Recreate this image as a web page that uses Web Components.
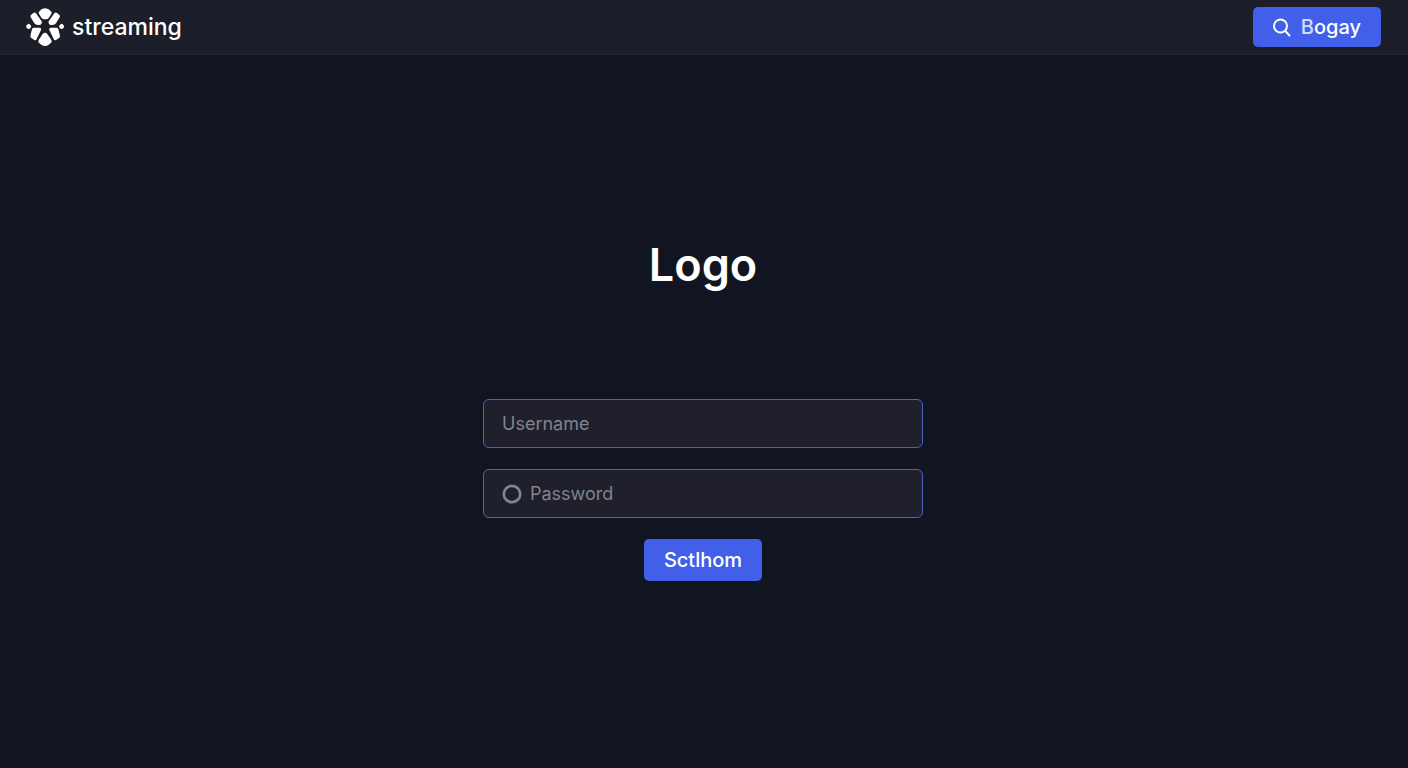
<!DOCTYPE html>
<html lang="en">
<head>
<meta charset="utf-8">
<meta name="viewport" content="width=device-width, initial-scale=1">
<title>streaming</title>
<style>
body { margin: 0; background: #111521; color: #fff; font-family: Inter, "Liberation Sans", sans-serif; }
</style>
</head>
<body>
<login-page></login-page>
<script>
function define(name, html, setup) {
  const template = document.createElement('template');
  template.innerHTML = html;
  customElements.define(name, class extends HTMLElement {
    constructor() {
      super();
      this.attachShadow({ mode: 'open' }).append(template.content.cloneNode(true));
    }
    connectedCallback() {
      if (setup) setup(this);
    }
  });
}

define('brand-mark', `
<style>
:host { display: block; }
a { display: flex; align-items: center; gap: 8px; color: #fff; text-decoration: none; font-size: 23px; line-height: 32px; font-weight: 500; }
svg { display: block; width: 38px; height: 38px; }
</style>
<a href="#">
  <svg viewBox="6 6 114 114" fill="#fff" aria-hidden="true">
    <path d="M45 17Q53 7 63 7T82 17Q84 20 82 24L74 36Q71 40 67 40H60Q56 40 53 36L45 24Q43 20 45 17Z"/>
    <path d="M44 109Q52 120 63 120T82 109Q84 106 82 102L70 84Q63 76 56 84L44 102Q42 106 44 109Z"/>
    <path d="M20 28L29 20Q33 18 36 22L53 46Q55 50 52 54Q49 58 44 57L37 56Q33 55 31 52L20 34Q18 31 20 28Z"/>
    <path d="M107 28L98 20Q94 18 91 22L74 46Q72 50 75 54Q78 58 83 57L90 56Q94 55 96 52L107 34Q109 31 107 28Z"/>
    <path d="M24 69Q26 65 30 65H46Q53 66 51 72L38 99Q36 104 31 102L22 96Q19 94 19 90Z"/>
    <path d="M103 69Q101 65 97 65H81Q74 66 76 72L89 99Q91 104 96 102L105 96Q108 94 108 90Z"/>
    <path d="M8 58Q14 48 20 58Q23 61 20 65Q14 73 8 65Q5 61 8 58Z"/>
    <path d="M107 58Q113 48 119 58Q121 61 119 65Q113 73 107 65Q104 61 107 58Z"/>
  </svg>
  <slot></slot>
</a>`);

define('search-button', `
<style>
:host { display: block; }
button { display: flex; align-items: center; gap: 8px; height: 40px; padding: 0 20px 0 18px; border: 0; border-radius: 5px; background: #415fe8; color: #fff; font: 500 20px/24px Inter, "Liberation Sans", sans-serif; }
svg { display: block; width: 22px; height: 22px; }
span { display: block; }
span::first-letter { color: #d3dafb; }
</style>
<button type="button">
  <svg viewBox="0 0 22 22" fill="none" stroke="#fff" stroke-width="2" stroke-linecap="round" aria-hidden="true"><circle cx="9.5" cy="10" r="6.5"/><path d="M14.3 15L18.5 19.5"/></svg>
  <span><slot></slot></span>
</button>`);

define('app-header', `
<style>
:host { display: flex; align-items: center; justify-content: space-between; height: 54px; padding: 0 27px 0 26px; background: #1c1f2a; border-bottom: 1px solid #232733; }
</style>
<brand-mark>streaming</brand-mark>
<search-button>Bogay</search-button>`);

define('text-field', `
<style>
:host { display: block; }
label { display: flex; align-items: center; gap: 8px; box-sizing: border-box; height: 49px; padding: 0 18px; border: 1px solid #4b62be; border-radius: 6px; background: #1f202b; }
input { flex: 1; min-width: 0; padding: 0; border: 0; outline: 0; background: none; color: #fff; font: 400 18px/24px Inter, "Liberation Sans", sans-serif; }
input::placeholder { color: #81838e; opacity: 1; }
</style>
<label><slot></slot><input></label>`, host => {
  const input = host.shadowRoot.querySelector('input');
  const text = host.getAttribute('label');
  input.type = host.getAttribute('type');
  input.name = text.toLowerCase();
  input.placeholder = text;
  input.setAttribute('aria-label', text);
});

define('login-form', `
<style>
:host { display: block; width: 100%; max-width: 440px; }
form { display: flex; flex-direction: column; gap: 21px; margin: 0; }
svg { display: block; width: 20px; height: 20px; }
button { align-self: center; height: 42px; padding: 0 20px; border: 0; border-radius: 5px; background: #415fe8; color: #fff; font: 500 20px/24px Inter, "Liberation Sans", sans-serif; }
</style>
<form>
  <text-field label="Username" type="text"></text-field>
  <text-field label="Password" type="password"><svg viewBox="0 0 20 20" fill="none" stroke="#81838e" stroke-width="2.7" aria-hidden="true"><circle cx="10" cy="10" r="8.2"/></svg></text-field>
  <button type="submit">Sctlhom</button>
</form>`);

define('login-page', `
<style>
:host { display: flex; flex-direction: column; min-height: 100vh; }
main { flex: 1; display: flex; flex-direction: column; align-items: center; justify-content: center; gap: 106px; padding: 0 18px 5px 16px; }
h1 { margin: 0; font-size: 45px; line-height: 56px; font-weight: 600; }
</style>
<app-header></app-header>
<main>
  <h1>Logo</h1>
  <login-form></login-form>
</main>`);
</script>
</body>
</html>
